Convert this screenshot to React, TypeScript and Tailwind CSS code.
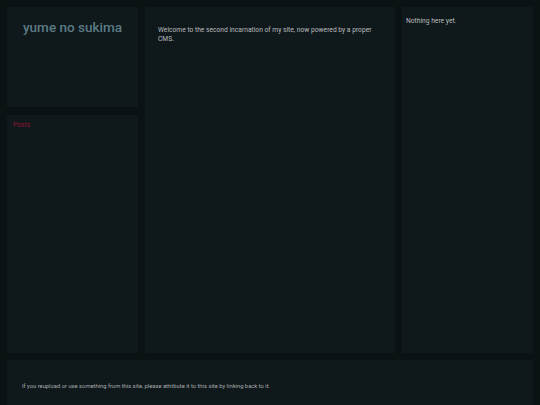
export default function App() {
  return (
    <div
      className="flex h-[419px] w-[540px] flex-col gap-[7px] bg-[#0b1214] p-[7px]"
      style={{ fontFamily: 'Roboto, "Liberation Sans", sans-serif' }}
    >
      <div className="flex h-[346px] gap-[7px]">
        <div className="flex w-[131px] flex-col gap-[8px]">
          <header className="h-[100px] bg-[#0f181b] pt-[11px] text-center">
            <h1 className="text-[13.5px] leading-[18px] font-medium text-[#5c7c85]">yume no sukima</h1>
          </header>
          <nav className="flex-1 bg-[#0f181b] px-[6px] pt-[6px]">
            <a className="block text-[6.7px] leading-[9px] text-[#8c1733]">Posts</a>
          </nav>
        </div>
        <main className="w-[250px] bg-[#0f181b] px-[13px] pt-[19px]">
          <p className="text-[6.7px] leading-[9px] text-[#b8bcbd]">
            Welcome to the second incarnation of my site, now powered by a proper CMS.
          </p>
        </main>
        <aside className="flex-1 bg-[#0f181b] px-[4px] pt-[10px]">
          <p className="text-[6.7px] leading-[9px] text-[#b8bcbd]">Nothing here yet.</p>
        </aside>
      </div>
      <footer className="flex h-[52px] items-center bg-[#0f181b] px-[15px]">
        <p className="text-[5.8px] text-[#a8acad]">
          If you reupload or use something from this site, please attribute it to this site by linking back to it.
        </p>
      </footer>
    </div>
  );
}
